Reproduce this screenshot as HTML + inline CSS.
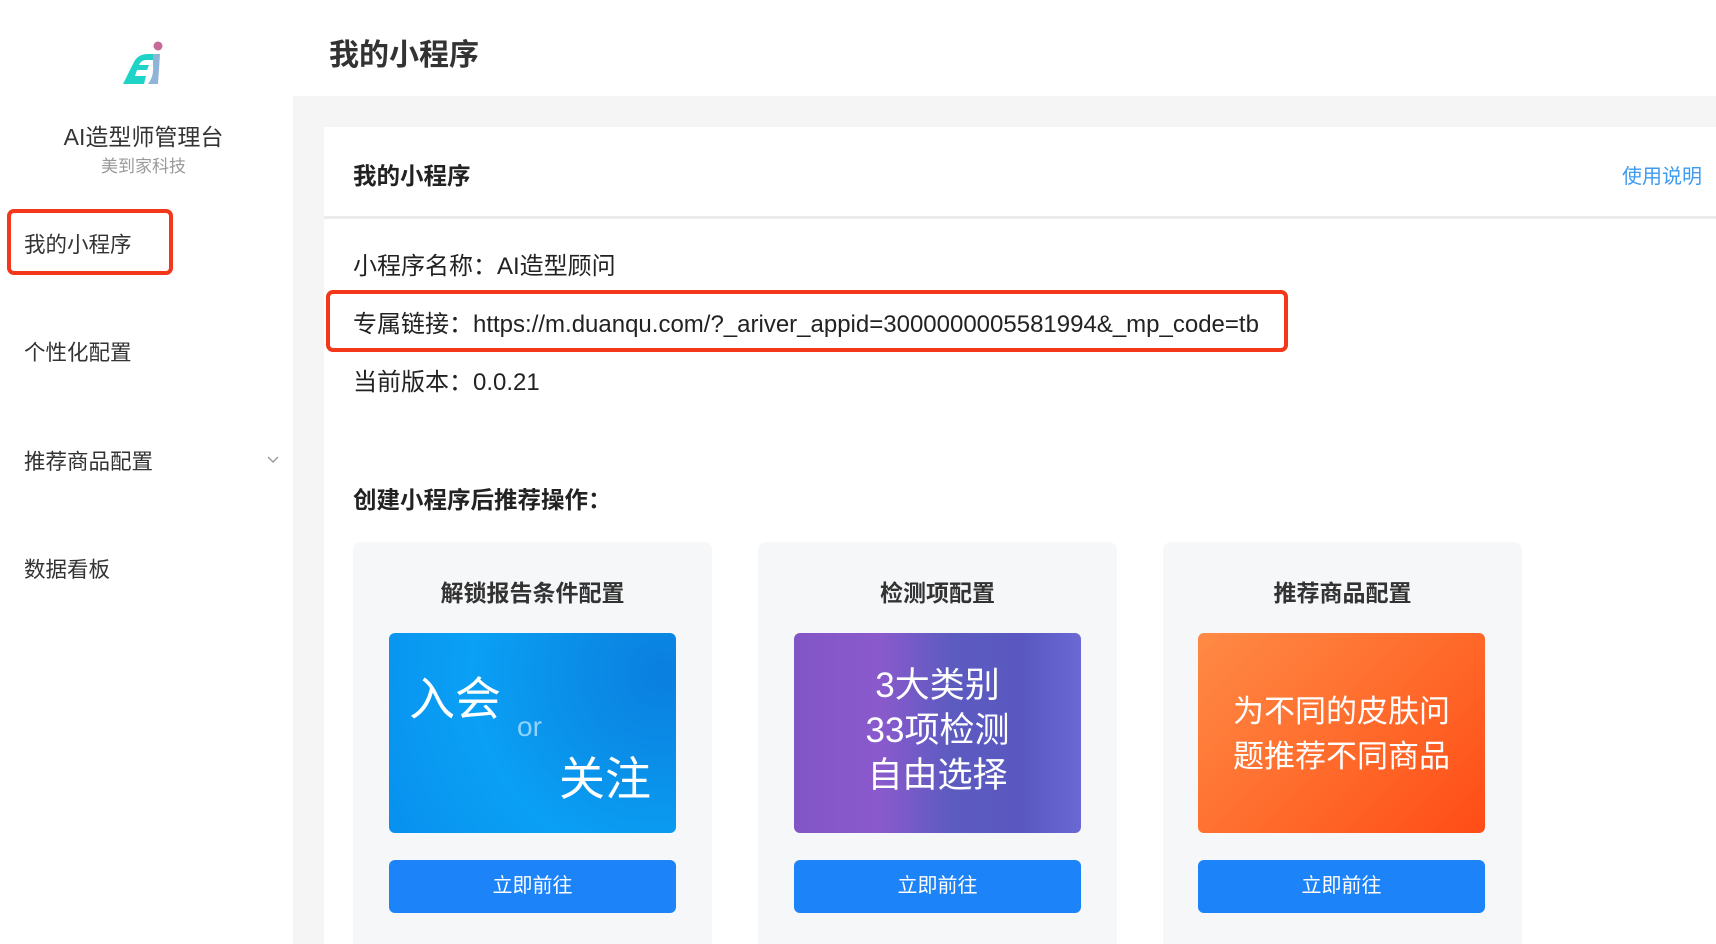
<!DOCTYPE html>
<html><head><meta charset="utf-8"><style>
*{margin:0;padding:0;box-sizing:border-box}
html,body{width:1716px;height:944px;overflow:hidden}
body{background:#fff;font-family:"Liberation Sans","Noto Sans CJK SC",sans-serif;position:relative;color:#333}
.a{position:absolute;white-space:nowrap}
.side{position:absolute;left:0;top:0;width:293px;height:944px;background:#fff}
.main{position:absolute;left:293px;top:96px;width:1423px;height:848px;background:#f5f5f5}
.card{position:absolute;left:324px;top:127px;width:1392px;height:817px;background:#fff}
.sc{position:absolute;top:542px;width:359px;height:402px;background:#f6f7f9;border-radius:8px 8px 0 0}
.sc .t{position:absolute;top:32px;width:100%;text-align:center;font-size:23px;font-weight:bold;color:#333}
.sc .img{position:absolute;left:36px;top:91px;width:287px;height:200px;border-radius:6px;overflow:hidden;color:#fff}
.sc .btn{position:absolute;left:36px;top:318px;width:287px;height:53px;border-radius:6px;background:#1d83f8;color:#fff;font-size:20px;text-align:center;line-height:53px}
</style></head><body>
<div class="side">
<svg class="a" style="left:120px;top:40px" width="46" height="46" viewBox="0 0 46 46">
<circle cx="38" cy="6" r="4.5" fill="#c86a98"/>
<path d="M3 44 L14 22 Q18 14 28 14 L33 14 L33 20 L26 20 Q21 20 19 25 L29 25 L27 30 L17 30 L15 36 L26 36 L24 44 Z" fill="#1fd3c6"/>
<path d="M33 14 L40 14 L38 44 L28 44 Q34 36 33 26 Z" fill="#8fb4d8"/>
</svg>
<div class="a" style="left:0;width:287px;text-align:center;top:118px;font-size:23px;color:#333">AI造型师管理台</div>
<div class="a" style="left:0;width:287px;text-align:center;top:152px;font-size:17px;color:#999">美到家科技</div>
<div class="a" style="left:7px;top:209px;width:166px;height:66px;border:4px solid #f2371b;border-radius:7px"></div>
<div class="a" style="left:24px;top:228px;font-size:21.5px;color:#333">我的小程序</div>
<div class="a" style="left:24px;top:336px;font-size:21.5px;color:#333">个性化配置</div>
<div class="a" style="left:24px;top:445px;font-size:21.5px;color:#333">推荐商品配置</div>
<svg class="a" style="left:266px;top:454px" width="14" height="10" viewBox="0 0 14 10"><path d="M2 3 L7 8 L12 3" fill="none" stroke="#999" stroke-width="1.4"/></svg>
<div class="a" style="left:24px;top:553px;font-size:21.5px;color:#333">数据看板</div>
</div>
<div class="a" style="left:329px;top:30px;font-size:30px;font-weight:bold;color:#333">我的小程序</div>
<div class="main"></div>
<div class="card">
<div class="a" style="left:29px;top:30px;font-size:23.5px;font-weight:bold;color:#222">我的小程序</div>
<div class="a" style="right:14px;top:33px;font-size:20px;color:#3d9bf0">使用说明</div>
<div class="a" style="left:0;right:0;top:89px;height:3px;background:#ececec"></div>
<div class="a" style="left:29px;top:119px;font-size:24px;color:#222">小程序名称：AI造型顾问</div>
<div class="a" style="left:2px;top:163px;width:962px;height:62px;border:4px solid #f2371b;border-radius:7px"></div>
<div class="a" style="left:29px;top:177px;font-size:24px;color:#222">专属链接：https://m.duanqu.com/?_ariver_appid=3000000005581994&amp;_mp_code=tb</div>
<div class="a" style="left:29px;top:235px;font-size:24px;color:#222">当前版本：0.0.21</div>
<div class="a" style="left:29px;top:354px;font-size:23.5px;font-weight:bold;color:#222">创建小程序后推荐操作：</div>
</div>
<div class="sc" style="left:353px"><div class="t">解锁报告条件配置</div>
<div class="img" style="background:radial-gradient(circle at 95% 20%,#0a7fe0,#0a8fe8 30%,#0aa0f5 60%,#0890ee)">
<div class="a" style="left:20px;top:30px;font-size:46px">入会</div>
<div class="a" style="left:128px;top:78px;font-size:28px;color:#8fd3ff">or</div>
<div class="a" style="left:170px;top:110px;font-size:46px">关注</div></div>
<div class="btn">立即前往</div></div>
<div class="sc" style="left:758px"><div class="t">检测项配置</div>
<div class="img" style="background:linear-gradient(90deg,#8255c6 0%,#8a5acc 30%,#5c5bc0 55%,#5a58c0 80%,#6a68d4 100%)">
<div class="a" style="left:0;width:100%;text-align:center;top:30px;font-size:35px;line-height:45px">3大类别<br>33项检测<br>自由选择</div></div>
<div class="btn">立即前往</div></div>
<div class="sc" style="left:1163px"><div class="t">推荐商品配置</div>
<div class="img" style="left:35px;background:linear-gradient(135deg,#ff8a45,#ff6d2d 50%,#ff4c16)">
<div class="a" style="left:0;width:100%;text-align:center;top:56px;font-size:31px;line-height:45px">为不同的皮肤问<br>题推荐不同商品</div></div>
<div class="btn" style="left:35px">立即前往</div></div>
</body></html>
